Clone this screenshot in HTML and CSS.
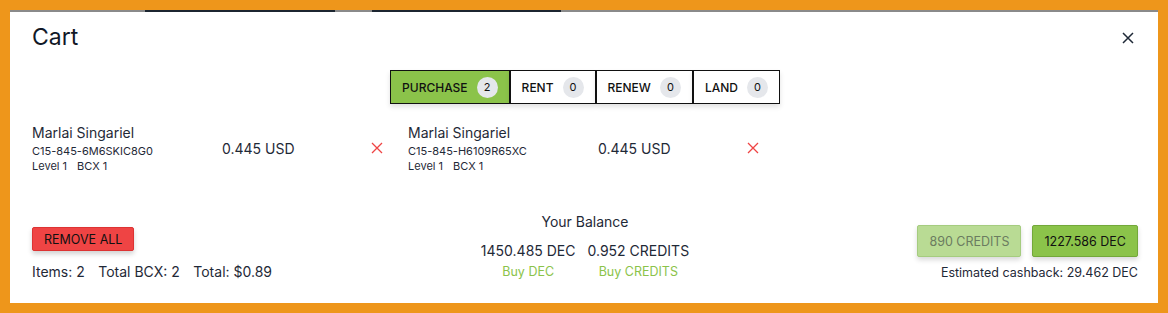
FILE: index.html
```html
<!DOCTYPE html>
<html>
<head>
<meta charset="utf-8">
<link rel="stylesheet" href="styles.css">
</head>
<body>
<div class="frame">
  <div class="backdrop-strip">
    <span class="strip-gray s1"></span>
    <span class="strip-dark s2"></span>
    <span class="strip-gray s3"></span>
    <span class="strip-dark s4"></span>
    <span class="strip-gray s5"></span>
  </div>
  <div class="modal">
    <div class="header">
      <h1 class="title">Cart</h1>
      <button class="close" aria-label="Close">
        <svg width="12" height="12" viewBox="0 0 12 12"><path d="M1 1L11 11M11 1L1 11" stroke="#1f2937" stroke-width="1.5" fill="none"/></svg>
      </button>
    </div>
    <div class="tabs">
      <button class="tab active">PURCHASE <span class="badge">2</span></button>
      <button class="tab">RENT <span class="badge">0</span></button>
      <button class="tab">RENEW <span class="badge">0</span></button>
      <button class="tab">LAND <span class="badge">0</span></button>
    </div>
    <div class="items">
      <div class="item">
        <div class="info">
          <div class="name">Marlai Singariel</div>
          <div class="code">C15-845-6M6SKIC8G0</div>
          <div class="meta"><span>Level 1</span><span>BCX 1</span></div>
        </div>
        <div class="price">0.445 USD</div>
        <button class="remove" aria-label="Remove">
          <svg width="12" height="12" viewBox="0 0 12 12"><path d="M1 1L11 11M11 1L1 11" stroke="#ef4444" stroke-width="1.3" fill="none"/></svg>
        </button>
      </div>
      <div class="item">
        <div class="info">
          <div class="name">Marlai Singariel</div>
          <div class="code">C15-845-H6109R65XC</div>
          <div class="meta"><span>Level 1</span><span>BCX 1</span></div>
        </div>
        <div class="price">0.445 USD</div>
        <button class="remove" aria-label="Remove">
          <svg width="12" height="12" viewBox="0 0 12 12"><path d="M1 1L11 11M11 1L1 11" stroke="#ef4444" stroke-width="1.3" fill="none"/></svg>
        </button>
      </div>
    </div>
    <div class="footer">
      <div class="left">
        <button class="remove-all">REMOVE ALL</button>
        <div class="totals"><span>Items: 2</span><span>Total BCX: 2</span><span>Total: $0.89</span></div>
      </div>
      <div class="center">
        <div class="bal-title">Your Balance</div>
        <div class="bal-row">
          <div class="bal-col"><div class="bal-val">1450.485 DEC</div><a class="buy">Buy DEC</a></div>
          <div class="bal-col"><div class="bal-val">0.952 CREDITS</div><a class="buy">Buy CREDITS</a></div>
        </div>
      </div>
      <div class="right">
        <div class="pay">
          <button class="pay-btn credits">890 CREDITS</button>
          <button class="pay-btn dec">1227.586 DEC</button>
        </div>
        <div class="cashback">Estimated cashback: 29.462 DEC</div>
      </div>
    </div>
  </div>
</div>
</body>
</html>
```

FILE: styles.css
```css
* { box-sizing: border-box; }
html, body { margin: 0; padding: 0; }
body {
  background: #ee961b;
  font-family: Inter, "Noto Sans", sans-serif;
  color: #1f2937;
  width: 1168px;
  height: 313px;
  overflow: hidden;
}
.frame {
  margin: 10px 10px 0 10px;
  width: 1148px;
}
.backdrop-strip {
  display: flex;
  height: 2px;
}
.strip-gray { background: #8a8a8a; }
.strip-dark { background: #1c2530; }
.s1 { width: 135px; }
.s2 { width: 190px; }
.s3 { width: 37px; }
.s4 { width: 189px; }
.s5 { flex: 1; }
.modal {
  background: #fff;
  height: 291px;
  padding: 0 20px 0 22px;
  display: flex;
  flex-direction: column;
}
.header {
  display: flex;
  justify-content: space-between;
  align-items: center;
  height: 50px;
}
.title {
  margin: 0;
  font-size: 23px;
  font-weight: 400;
  color: #111827;
}
.close {
  background: none;
  border: 0;
  padding: 0;
  margin-right: 4px;
  margin-top: 2px;
  display: flex;
}
.tabs {
  display: flex;
  justify-content: center;
  margin-top: 8px;
}
.tab {
  display: flex;
  align-items: center;
  gap: 9px;
  height: 34px;
  padding: 0 11px;
  background: #fff;
  border: 1px solid #111;
  font-family: Inter, sans-serif;
  font-size: 12px;
  font-weight: 500;
  color: #111;
  box-shadow: 0 3px 5px rgba(0,0,0,0.12);
}
.tab.active { background: #8bc34a; }
.badge {
  display: inline-flex;
  align-items: center;
  justify-content: center;
  width: 21px;
  height: 21px;
  border-radius: 50%;
  background: #e5e7eb;
  font-size: 11px;
  font-weight: 400;
}
.items {
  display: flex;
  margin-top: 20px;
}
.item {
  width: 376px;
  display: flex;
  align-items: center;
}
.info { width: 190px; }
.name { font-size: 14px; line-height: 18px; }
.code { font-size: 11px; line-height: 16px; margin-top: 1px; }
.meta { font-size: 11px; line-height: 14px; display: flex; gap: 10px; }
.price { width: 149px; font-size: 14px; margin-top: -1px; }
.remove {
  background: none;
  border: 0;
  padding: 0;
  display: flex;
  margin-top: -1px;
}
.footer {
  display: grid;
  grid-template-columns: 1fr auto 1fr;
  align-items: end;
  margin-top: 40px;
}
.remove-all {
  background: #ef4444;
  border: 1px solid #d33;
  border-radius: 2px;
  font-family: Inter, sans-serif;
  font-size: 12.5px;
  color: #111;
  height: 24px;
  padding: 0 11px;
  box-shadow: 0 3px 5px rgba(0,0,0,0.18);
}
.totals {
  font-size: 14px;
  margin-top: 12px;
  display: flex;
  gap: 13.5px;
  line-height: 18px;
}
.center {
  text-align: center;
}
.bal-title { font-size: 14px; line-height: 18px; }
.bal-row { display: flex; gap: 12px; margin-top: 11px; }
.bal-val { font-size: 14px; line-height: 18px; }
.buy { color: #8bc34a; font-size: 12.5px; line-height: 18px; display: block; margin-top: 3px; }
.right {
  display: flex;
  flex-direction: column;
  align-items: flex-end;
}
.pay { display: flex; gap: 11px; }
.pay-btn {
  height: 32px;
  padding: 0 11px;
  border-radius: 2px;
  font-family: Inter, sans-serif;
  font-size: 12.5px;
  box-shadow: 0 3px 5px rgba(0,0,0,0.15);
}
.credits { background: #b9db94; border: 1px solid #a5cc7f; color: #6b7c60; }
.dec { background: #8bc34a; border: 1px solid #73a83a; color: #111; }
.cashback { font-size: 12.5px; margin-top: 8px; line-height: 16px; }
```
